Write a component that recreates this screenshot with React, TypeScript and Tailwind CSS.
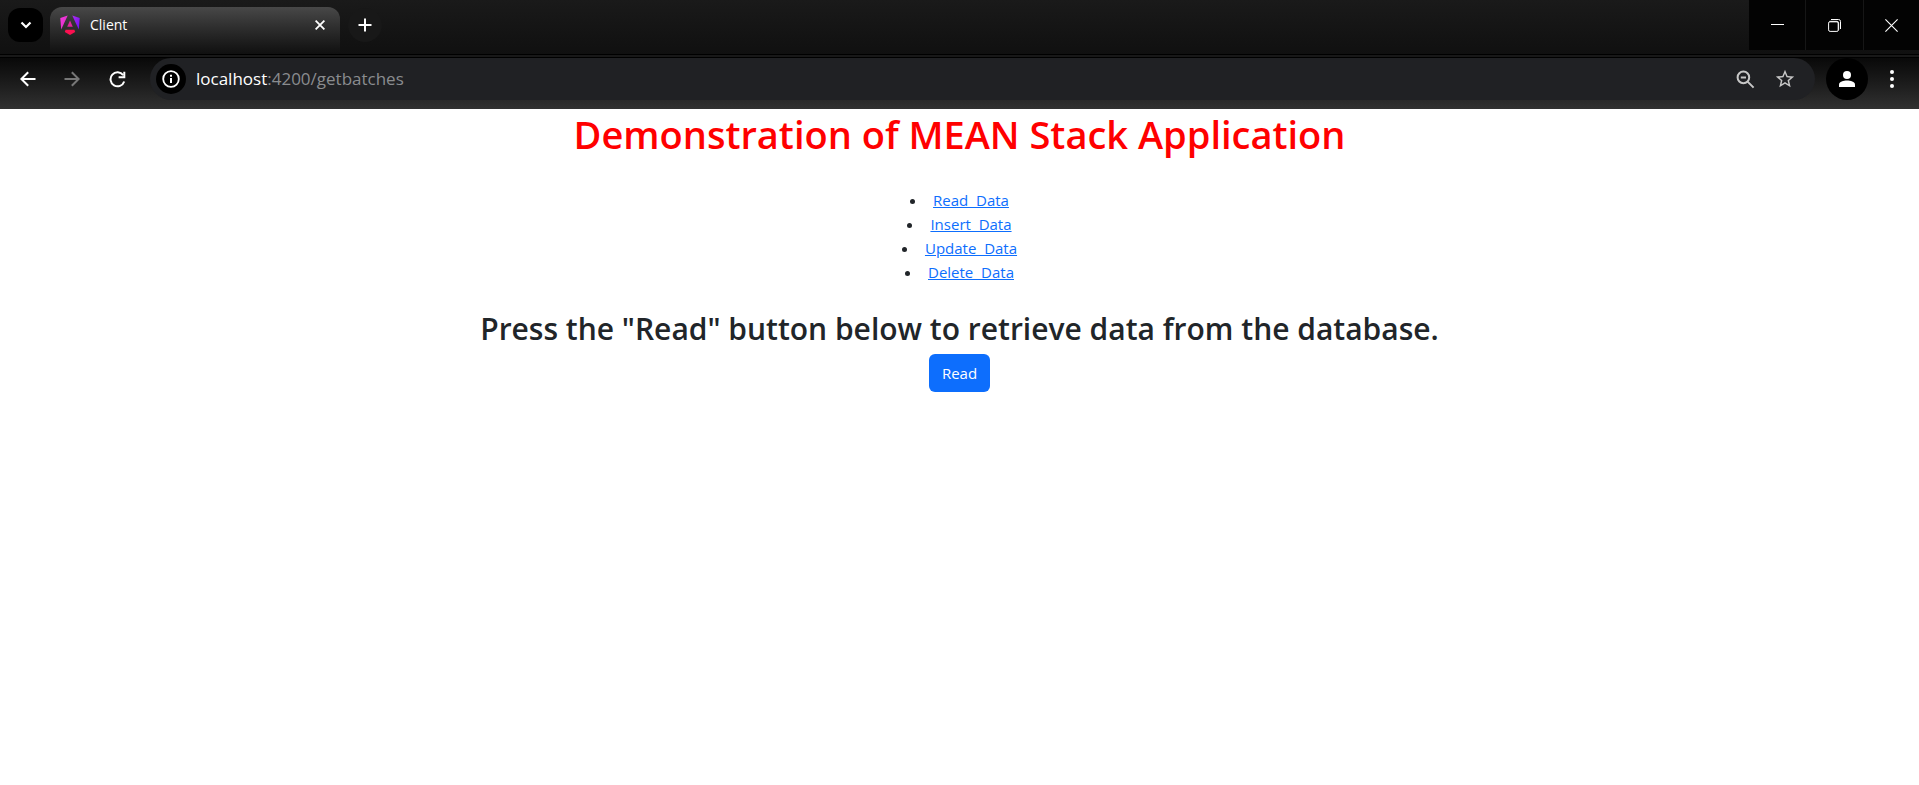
import type { ReactNode } from "react";

const links = ["Read \u00a0Data", "Insert \u00a0Data", "Update \u00a0Data", "Delete \u00a0Data"];

function AngularLogo() {
  return (
    <svg width="20" height="20" viewBox="0 0 20 20" aria-hidden="true">
      <defs>
        <linearGradient id="ngLeft" x1="0" y1="0" x2="1" y2="1">
          <stop offset="0" stopColor="#f637e3" />
          <stop offset="1" stopColor="#d92fb8" />
        </linearGradient>
        <linearGradient id="ngRight" x1="0" y1="0" x2="1" y2="1">
          <stop offset="0" stopColor="#b02cf0" />
          <stop offset="1" stopColor="#6a10f5" />
        </linearGradient>
      </defs>
      <path d="M7.7 0.4 L0.3 3 L1.2 14.6 Z" fill="url(#ngLeft)" />
      <path d="M12.3 0.4 L19.7 3 L18.8 14.6 Z" fill="url(#ngRight)" />
      <path d="M10 5.4 L12.8 11.8 H7.2 Z" fill="#e0259c" />
      <path d="M5.6 14.8 H14.4 L15.2 17 L10 20 L4.8 17 Z" fill="#fb1050" />
    </svg>
  );
}

function IconButton({ label, className, children }: { label: string; className: string; children: ReactNode }) {
  return (
    <button type="button" aria-label={label} className={`flex shrink-0 items-center justify-center ${className}`}>
      {children}
    </button>
  );
}

function TitleBar() {
  return (
    <header className="flex h-[54px] items-start bg-linear-to-b from-[#1a1a1a] to-[#101010]">
      <div className="flex flex-1 items-start pl-2">
        <IconButton label="Search tabs" className="mt-2 h-[34px] w-[35px] rounded-xl bg-black text-white">
          <svg width="12" height="8" viewBox="0 0 12 8" fill="none" stroke="currentColor" strokeWidth="2.2">
            <path d="M1.5 1.5 L6 6 L10.5 1.5" />
          </svg>
        </IconButton>
        <div className="mt-[7px] ml-[7px] flex h-[47px] w-[290px] items-start rounded-t-xl bg-linear-to-b from-[#484848] to-[#101010] pt-2 pr-[15px] pl-[10px]">
          <AngularLogo />
          <span className="flex-1 pl-[10px] text-[14px] leading-5 text-white">Client</span>
          <IconButton label="Close tab" className="h-5 w-[10px] text-white">
            <svg width="10" height="10" viewBox="0 0 10 10" fill="none" stroke="currentColor" strokeWidth="1.8">
              <path d="M0.6 0.6 L9.4 9.4 M9.4 0.6 L0.6 9.4" />
            </svg>
          </IconButton>
        </div>
        <IconButton label="New tab" className="mt-2 ml-2 size-[34px] rounded-full bg-[#181818] text-white">
          <svg width="14" height="14" viewBox="0 0 14 14" fill="none" stroke="currentColor" strokeWidth="2">
            <path d="M7 0.5 V13.5 M0.5 7 H13.5" />
          </svg>
        </IconButton>
      </div>
      <div className="flex h-[50px] gap-px bg-[#161616] text-white">
        <IconButton label="Minimize" className="w-14 bg-[#030303]">
          <svg width="13" height="13" viewBox="0 0 13 13" fill="none" stroke="currentColor" shapeRendering="crispEdges">
            <path d="M0 5.5 H13" />
          </svg>
        </IconButton>
        <IconButton label="Restore" className="w-[57px] bg-[#030303]">
          <svg width="13" height="13" viewBox="0 0 13 13" fill="none" stroke="currentColor">
            <path d="M3 0.5 H10.5 Q12.5 0.5 12.5 2.5 V10" />
            <path d="M1.5 2.6 H8.5 Q10.4 2.6 10.4 4.5 V11" stroke="#888888" strokeWidth="1.6" />
            <rect x="0.6" y="2.6" width="9.8" height="9.8" rx="1.5" />
          </svg>
        </IconButton>
        <IconButton label="Close" className="w-[55px] bg-[#030303]">
          <svg width="13" height="13" viewBox="0 0 13 13" fill="none" stroke="currentColor" strokeWidth="1.1">
            <path d="M0.4 0.4 L12.6 12.6 M12.6 0.4 L0.4 12.6" />
          </svg>
        </IconButton>
      </div>
    </header>
  );
}

function Toolbar() {
  return (
    <nav aria-label="Browser" className="flex h-[52px] items-start border-t border-black bg-linear-to-b from-[#090909] to-[#313131] pr-[11px] pl-3 text-white">
      <IconButton label="Back" className="h-[42px] w-8">
        <svg width="16" height="16" viewBox="0 0 16 16" fill="none" stroke="currentColor" strokeWidth="2">
          <path d="M15.5 8 H1.8 M8.2 1.2 L1.4 8 L8.2 14.8" />
        </svg>
      </IconButton>
      <IconButton label="Forward" className="ml-3 h-[42px] w-8 text-[#777777]">
        <svg width="16" height="16" viewBox="0 0 16 16" fill="none" stroke="currentColor" strokeWidth="2">
          <path d="M0.5 8 H14.2 M7.8 1.2 L14.6 8 L7.8 14.8" />
        </svg>
      </IconButton>
      <IconButton label="Reload" className="ml-[13px] h-[42px] w-8">
        <svg width="17" height="17" viewBox="0 0 17 17" fill="none" stroke="currentColor" strokeWidth="2">
          <path d="M15.2 10.5 A7 7 0 1 1 14.2 4.2" />
          <path d="M15.3 0.8 V6.2 H9.6" />
        </svg>
      </IconButton>
      <div className="ml-[17px] flex h-[42px] flex-1 items-center rounded-full bg-[#202124] pr-5 pl-[6px]">
        <IconButton label="Site information" className="size-[30px] rounded-full bg-black">
          <svg width="18" height="18" viewBox="0 0 18 18" fill="none" stroke="currentColor" strokeWidth="2">
            <circle cx="9" cy="9" r="7.8" strokeWidth="1.8" />
            <path d="M9 8 V13 M9 4.8 V6.8" />
          </svg>
        </IconButton>
        <a href="#address" className="flex-1 pl-[10px] text-[17px] leading-6 text-[#8a8c8f]">
          <span className="text-white">localhost</span>:4200/getbatches
        </a>
        <IconButton label="Zoom" className="size-5 text-[#c7c7c7]">
          <svg width="19" height="19" viewBox="0 0 19 19" fill="none" stroke="currentColor" strokeWidth="2">
            <circle cx="7.4" cy="7.4" r="5.8" />
            <path d="M4.8 7.4 H10 M11.6 11.6 L17.6 17.6" />
          </svg>
        </IconButton>
        <IconButton label="Bookmark this page" className="ml-5 size-5 text-[#c7c7c7]">
          <svg width="22" height="22" viewBox="0 0 24 24" fill="currentColor" className="shrink-0">
            <path d="M22 9.24l-7.19-.62L12 2 9.19 8.63 2 9.24l5.46 4.73L5.82 21 12 17.27 18.18 21l-1.63-7.03L22 9.24zM12 15.4l-3.76 2.27 1-4.28-3.32-2.88 4.38-.38L12 6.1l1.71 4.04 4.38.38-3.32 2.88 1 4.28L12 15.4z" />
          </svg>
        </IconButton>
      </div>
      <IconButton label="Profile" className="ml-[11px] size-[42px] rounded-full bg-black">
        <svg width="16" height="16" viewBox="0 0 16 16" fill="currentColor">
          <circle cx="8" cy="4" r="4" />
          <path d="M0 16 V13.6 C0 10.8 4.6 9.6 8 9.6 S16 10.8 16 13.6 V16 Z" />
        </svg>
      </IconButton>
      <IconButton label="Menu" className="ml-2 h-[42px] w-8">
        <svg width="4" height="18" viewBox="0 0 4 18" fill="currentColor">
          <circle cx="2" cy="2" r="2" />
          <circle cx="2" cy="9" r="2" />
          <circle cx="2" cy="16" r="2" />
        </svg>
      </IconButton>
    </nav>
  );
}

export default function App() {
  return (
    <div className="min-h-screen bg-white font-['Open_Sans','Noto_Sans',sans-serif]">
      <TitleBar />
      <div className="h-[3px] border-t border-black bg-[#181818]" />
      <Toolbar />
      <main className="text-center text-[#212529]">
        <h1 className="text-[38px] leading-[50px] font-semibold text-[#ff0000]">
          Demonstration of MEAN Stack Application
        </h1>
        <ul className="mt-[29px] list-inside list-disc text-[15px] leading-6">
          {links.map((text) => (
            <li key={text}>
              <a href="#data" className="ml-0.5 text-[#0d6efd] underline">
                {text}
              </a>
            </li>
          ))}
        </ul>
        <h2 className="mt-[26px] text-[30px] leading-[38px] font-semibold">
          Press the "Read" button below to retrieve data from the database.
        </h2>
        <button type="button" className="mt-[6px] h-[38px] rounded-md bg-[#0d6efd] px-[13px] text-[15px] leading-6 text-white">
          Read
        </button>
      </main>
    </div>
  );
}
